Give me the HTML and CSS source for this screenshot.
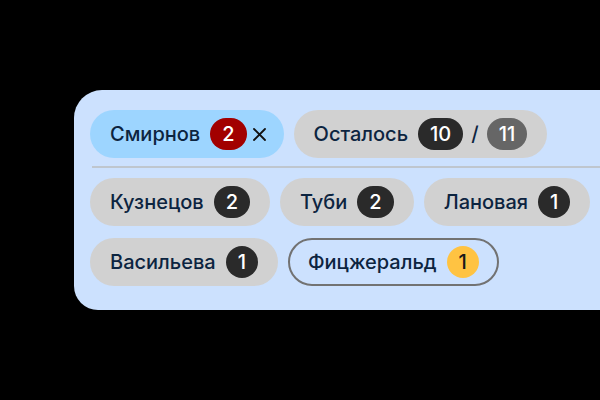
FILE: index.html
```html
<!DOCTYPE html>
<html lang="ru">
<head>
<meta charset="utf-8">
<link rel="stylesheet" href="styles.css">
</head>
<body>
<div class="stage">
  <div class="panel">
    <div class="row">
      <div class="chip chip-active">
        <span class="label">Смирнов</span>
        <span class="badge badge-red">2</span>
        <svg class="close" width="13" height="13" viewBox="0 0 13 13" aria-label="Удалить"><path d="M1 1L12 12M12 1L1 12" stroke="#111" stroke-width="1.8" stroke-linecap="round" fill="none"/></svg>
      </div>
      <div class="chip chip-total">
        <span class="label">Осталось</span>
        <span class="badge">10</span>
        <span class="slash">/</span>
        <span class="badge badge-grey">11</span>
      </div>
    </div>
    <div class="divider"></div>
    <div class="row">
      <div class="chip"><span class="label">Кузнецов</span><span class="badge">2</span></div>
      <div class="chip"><span class="label">Туби</span><span class="badge">2</span></div>
      <div class="chip"><span class="label">Лановая</span><span class="badge">1</span></div>
    </div>
    <div class="row row-last">
      <div class="chip"><span class="label">Васильева</span><span class="badge">1</span></div>
      <div class="chip chip-outline"><span class="label">Фицжеральд</span><span class="badge badge-yellow">1</span></div>
    </div>
  </div>
</div>
</body>
</html>
```

FILE: styles.css
```css
html, body {
  margin: 0;
  padding: 0;
  background: #000;
  width: 600px;
  height: 400px;
  overflow: hidden;
}
.stage {
  padding: 90px 0 0 74px;
}
.panel {
  background: #cce1fe;
  border-radius: 28px 0 0 24px;
  padding: 20px 0 24px 16px;
  font-family: Inter, "Noto Sans", sans-serif;
  font-weight: 500;
  color: #0c2440;
}
.row {
  display: flex;
  gap: 10px;
  white-space: nowrap;
  margin-bottom: 12px;
}
.row.row-last { margin-bottom: 0; }
.divider {
  height: 2px;
  background: #bfc6ce;
  margin: -4px 0 10px 2px;
}
.chip {
  display: flex;
  align-items: center;
  height: 48px;
  box-sizing: border-box;
  padding: 0 20px;
  border-radius: 24px;
  background: #d1d1d1;
  font-size: 20px;
  flex: none;
}
.chip-active {
  background: #9dd5ff;
  padding-right: 18px;
}
.chip-outline {
  background: transparent;
  border: 2px solid #727272;
  padding: 0 18px;
}
.label { margin-right: 10px; }
.badge {
  display: inline-flex;
  align-items: center;
  justify-content: center;
  height: 32px;
  min-width: 32px;
  box-sizing: border-box;
  padding: 0 12px;
  border-radius: 16px;
  background: #2a2a2a;
  color: #fff;
  font-size: 20px;
}
.badge-red { background: #a20000; }
.badge-grey { background: #666666; }
.badge-yellow { background: #ffc342; color: #1a1a1a; }
.close {
  margin-left: 6px;
  flex: none;
}
.slash {
  margin: 0 8px 0 8px;
}
```
